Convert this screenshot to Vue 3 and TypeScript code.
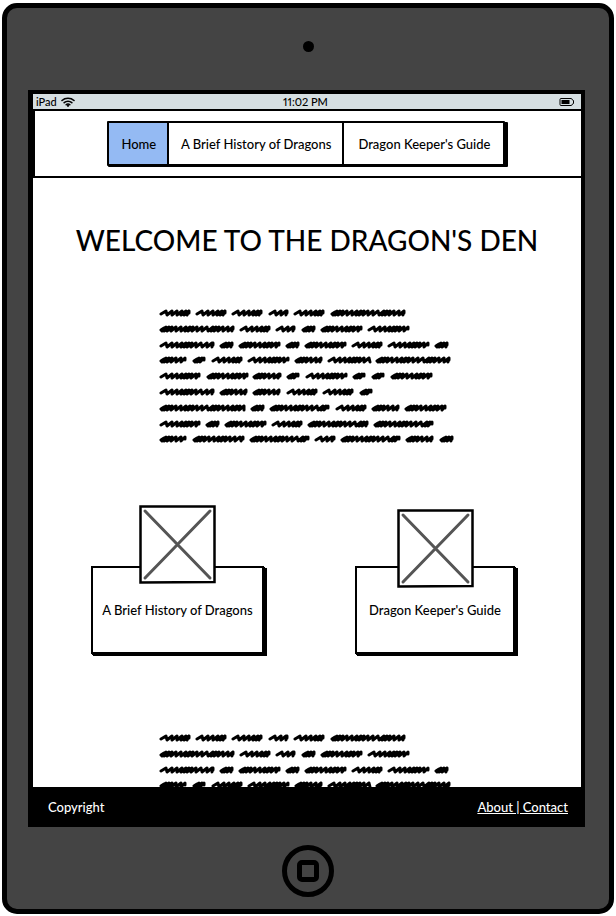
<script setup lang="ts">
interface NavItem {
  id: string
  label: string
  current: boolean
}

interface Card {
  id: string
  label: string
}

const navItems: NavItem[] = [
  { id: 'home', label: 'Home', current: true },
  { id: 'history', label: 'A Brief History of Dragons', current: false },
  { id: 'guide', label: "Dragon Keeper's Guide", current: false },
]

const cards: Card[] = [
  { id: 'history', label: 'A Brief History of Dragons' },
  { id: 'guide', label: "Dragon Keeper's Guide" },
]

// Each line of placeholder text is a list of [start, end] word extents.
type Word = [number, number]
const lines: Word[][] = [
  [[1, 32], [37, 68], [73, 104], [110, 130], [135, 166], [172, 247]],
  [[1, 76], [81, 112], [117, 137], [143, 157], [162, 204], [209, 251]],
  [[1, 56], [61, 75], [80, 122], [127, 141], [146, 188], [193, 224], [229, 271], [276, 290]],
  [[1, 28], [34, 47], [53, 84], [89, 131], [136, 164], [169, 212], [217, 292]],
  [[1, 42], [48, 90], [94, 123], [128, 141], [147, 189], [194, 207], [213, 226], [232, 274]],
  [[1, 56], [61, 89], [94, 122], [128, 159], [164, 195], [201, 214]],
  [[1, 87], [92, 106], [111, 171], [177, 208], [213, 241], [246, 288]],
  [[1, 42], [47, 61], [66, 108], [113, 144], [149, 210], [215, 275]],
  [[1, 28], [34, 86], [91, 151], [156, 177], [182, 242], [247, 275], [281, 295]],
]

// Runs of wide and tight strokes that the pen cycles through.
const openRhythm = [6, 5, 5, 4, 3, 3, 4, 5]
const tightRhythm = [3, 3, 4, 5, 5, 4, 3, 4, 5, 5, 6]

function scribble([start, end]: Word, y: number): string {
  const width = end - start
  const tight = width < 16 || (width > 26 && width < 30) || width > 56 || (width > 40 && start % 2 === 0)
  const rhythm = tight ? tightRhythm : openRhythm
  let x = start + 1
  let d = tight ? `M${x + 3} ${y - 1}L${x} ${y + 1}L${x + 1} ${y + 2}` : `M${x} ${y + 1}`
  let i = 0
  while (x < end - 6) {
    const step = rhythm[i % rhythm.length]
    d += `L${x + 5} ${y - 2}L${x + step} ${y + 2}`
    x += step
    i += 1
  }
  return `${d}L${end - 2} ${y - 2}L${end - 2} ${y}`
}

const paths: string[] = lines.map((line, row) =>
  line.map((word) => scribble(word, 4 + Math.round(row * 15.8))).join(''),
)
</script>

<template>
  <div class="page">
    <div class="tablet">
      <div class="bezel-top"><span class="camera"></span></div>

      <div class="screen">
        <div class="status">
          <span class="carrier">
            iPad
            <svg class="wifi" viewBox="0 0 14 10" aria-hidden="true">
              <path d="M1 3.5C4.3.5 9.700.5 13 3.500M3.200 5.700c2.100-2 5.500-2 7.600 0M5.200 7.700c1-1 2.600-1 3.600 0" />
              <circle cx="7" cy="8.800" r="1.100" />
            </svg>
          </span>
          <span class="clock">11:02 PM</span>
          <svg class="battery" viewBox="0 0 16 10" aria-hidden="true">
            <path d="M2 1.500h10q1 0 1 1l1.500 1v3l-1.500 1q0 1-1 1H2q-1 0-1-1v-5q0-1 1-1z" />
            <rect x="2.500" y="3" width="8" height="4" />
          </svg>
        </div>

        <header class="topbar">
          <nav class="tabs" aria-label="Main">
            <a
              v-for="item in navItems"
              :key="item.id"
              :href="'#' + item.id"
              class="tab"
              :class="{ current: item.current }"
              :aria-current="item.current ? 'page' : undefined"
            >{{ item.label }}</a>
          </nav>
        </header>

        <main class="content">
          <h1 class="title">WELCOME TO THE DRAGON'S DEN</h1>

          <svg class="scribbles" viewBox="0 0 296 136" aria-hidden="true">
            <path v-for="(d, i) in paths" :key="i" :d="d" />
          </svg>

          <div class="cards">
            <a v-for="card in cards" :key="card.id" :href="'#' + card.id" class="card" :class="card.id">
              <svg class="thumb" viewBox="0 0 77 79" aria-hidden="true">
                <path class="frame" d="M1.500 1.500L75.500 1.500V77L1.500 77.500Z" />
                <path class="cross" d="M6 6L71 73M71 6L6 73" />
              </svg>
              <span class="card-box">{{ card.label }}</span>
            </a>
          </div>

          <svg class="scribbles" viewBox="0 0 296 136" aria-hidden="true">
            <path v-for="(d, i) in paths" :key="i" :d="d" />
          </svg>
        </main>

        <footer class="footer">
          <span>Copyright</span>
          <a href="#about">About | Contact</a>
        </footer>
      </div>

      <div class="bezel-bottom">
        <button class="home-button" type="button" aria-label="Home button"><span></span></button>
      </div>
    </div>
  </div>
</template>

<style>
body {
  background: #fff;
}
</style>

<style scoped>
.page {
  box-sizing: border-box;
  height: 100vh;
  padding: 3px 2px 2px;
  font-family: 'Lato', 'Liberation Sans', sans-serif;
  font-size: 13px;
  font-weight: 500;
  color: #000;
}

.tablet {
  box-sizing: border-box;
  display: flex;
  flex-direction: column;
  height: 100%;
  padding: 0 24px 0 21px;
  background: #444;
  border: 5px solid #000;
  border-radius: 15px;
}

.bezel-top {
  display: flex;
  flex: none;
  justify-content: center;
  align-items: center;
  height: 82px;
  padding-left: 3px;
}

.camera {
  width: 11px;
  height: 11px;
  margin-bottom: 6px;
  background: #000;
  border-radius: 50%;
}

.screen {
  display: flex;
  flex: 1;
  flex-direction: column;
  min-height: 0;
  padding: 4px 4px 0 5px;
  background: #000;
}

.status {
  display: grid;
  flex: none;
  grid-template-columns: 1fr auto 1fr;
  align-items: center;
  height: 15px;
  padding: 0 6px 0 3px;
  font-size: 11px;
  line-height: 15px;
  background: #d6dfe2;
}

.carrier {
  display: flex;
  gap: 4px;
  align-items: center;
}

.clock {
  font-variant-numeric: proportional-nums;
}

.wifi {
  width: 14px;
  height: 10px;
}

.wifi path {
  fill: none;
  stroke: #000;
  stroke-width: 1.6;
  stroke-linecap: round;
}

.battery {
  justify-self: end;
  width: 16px;
  height: 10px;
}

.battery path {
  fill: none;
  stroke: #000;
}

.topbar {
  display: flex;
  flex: none;
  justify-content: center;
  margin: 2px 0 2px 2px;
  padding: 10px 4px 10px 0;
  background: #fff;
}

.tabs {
  display: grid;
  grid-template-columns: 58fr 174fr 160fr;
  gap: 2px;
  box-sizing: border-box;
  width: 398px;
  max-width: 100%;
  background: #000;
  border: 2px solid #000;
  border-radius: 1px;
  box-shadow: 1px 1px 0 #000, 3px 1px 0 #000;
}

.tab {
  display: flex;
  justify-content: center;
  align-items: center;
  height: 41px;
  padding-left: 2px;
  color: #000;
  text-decoration: none;
  white-space: nowrap;
  background: #fff;
}

.tab.current {
  background: #94baf3;
}

.content {
  display: flex;
  flex: 1;
  flex-direction: column;
  align-items: center;
  min-height: 0;
  overflow: auto;
  scrollbar-width: none;
  background: #fff;
}

.title {
  margin: 44px 0 51px;
  font-size: 28px;
  font-weight: 500;
  line-height: 36px;
  white-space: nowrap;
}

.scribbles {
  flex: none;
  width: 296px;
  height: 136px;
}

.scribbles path {
  fill: none;
  stroke: #000;
  stroke-width: 3;
  stroke-linecap: round;
  stroke-linejoin: round;
}

.cards {
  display: flex;
  flex: none;
  justify-content: space-between;
  align-items: flex-end;
  align-self: stretch;
  margin: 60px 0 80px;
  padding: 0 66px 0 58px;
}

.card {
  display: flex;
  flex-direction: column;
  align-items: center;
  width: 173px;
  color: #000;
  text-decoration: none;
}

.card.guide {
  width: 160px;
}

.thumb {
  position: relative;
  width: 77px;
  height: 79px;
  margin-bottom: -18px;
}

.guide .thumb {
  margin-bottom: -22px;
}

.frame {
  fill: #fff;
  stroke: #000;
  stroke-width: 2.5;
}

.cross {
  fill: none;
  stroke: #555;
  stroke-width: 3;
  stroke-linecap: round;
}

.card-box {
  display: flex;
  justify-content: center;
  align-items: center;
  box-sizing: border-box;
  width: 100%;
  height: 88px;
  background: #fff;
  border: 2px solid #000;
  box-shadow: 1px 1px 0 #000, 2px 2px 0 #000, 3px 2px 0 #000;
}

.footer {
  display: flex;
  flex: none;
  justify-content: space-between;
  align-items: center;
  height: 40px;
  padding: 0 13px 0 15px;
  color: #fff;
  background: #000;
}

.footer a {
  color: #fff;
}

.bezel-bottom {
  display: flex;
  flex: none;
  justify-content: center;
  padding: 18px 0 12px 3px;
}

.home-button {
  display: flex;
  justify-content: center;
  align-items: center;
  box-sizing: border-box;
  width: 52px;
  height: 52px;
  padding: 0;
  background: none;
  border: 5px solid #000;
  border-radius: 50%;
}

.home-button span {
  box-sizing: border-box;
  width: 22px;
  height: 22px;
  border: 5px solid #000;
  border-radius: 5px;
}
</style>
